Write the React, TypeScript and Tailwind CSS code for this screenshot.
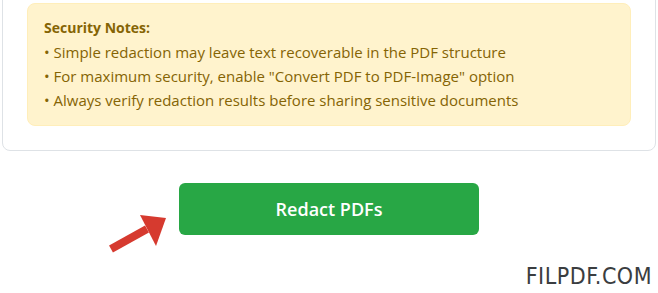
const notes = [
  "Simple redaction may leave text recoverable in the PDF structure",
  'For maximum security, enable "Convert PDF to PDF-Image" option',
  "Always verify redaction results before sharing sensitive documents",
];

const Arrow = () => (
  <svg width="70" height="50" viewBox="0 0 70 50" className="absolute left-[-72px] top-[24px]">
    <path d="M4 42 L40 22" stroke="#d63a2f" strokeWidth="8" strokeLinecap="butt" />
    <polygon points="59,11 33,8 49,39" fill="#d63a2f" />
  </svg>
);

export default function App() {
  return (
    <div className="h-[293px] w-[658px] overflow-hidden bg-white font-['Open_Sans',sans-serif]">
      <div className="mx-[2px] -mt-[20px] rounded-lg border border-[#dee2e6] px-6 pb-6 pt-[22px]">
        <div className="rounded-lg border border-[#ffeeba] bg-[#fff3cd] px-4 pb-[13px] pt-[12px] text-[15px] leading-[24px] text-[#856404]">
          <div className="text-[14px] font-bold">Security Notes:</div>
          {notes.map((n) => (
            <div key={n}>• {n}</div>
          ))}
        </div>
      </div>
      <div className="mt-[32px] flex justify-center">
        <div className="relative">
          <Arrow />
          <button className="h-[52px] w-[300px] rounded-md bg-[#28a745] text-[18px] font-semibold text-white">
            Redact PDFs
          </button>
        </div>
      </div>
      <div className="mr-[6px] mt-[30px] text-right font-['DejaVu_Sans_Condensed','DejaVu_Sans',sans-serif] text-[23px] leading-none tracking-[0.5px] text-[#3a3d40]">
        FILPDF.COM
      </div>
    </div>
  );
}
